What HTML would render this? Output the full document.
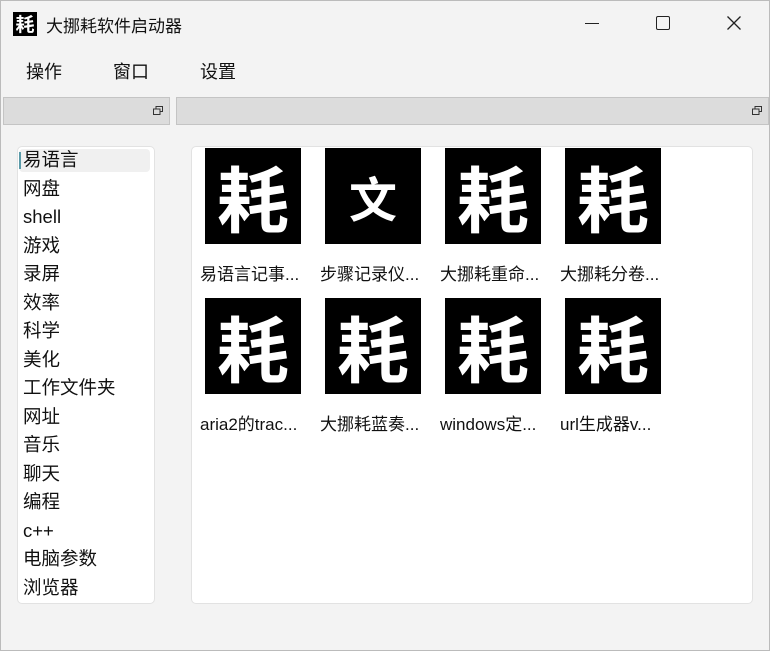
<!DOCTYPE html>
<html><head><meta charset="utf-8"><style>
body{margin:0;width:770px;height:651px;background:#f0f0f0;font-family:"Liberation Sans","Noto Sans CJK SC",sans-serif;position:relative;overflow:hidden;color:#111}
.win{position:absolute;left:0;top:0;width:770px;height:651px;background:#f3f3f3;border:1px solid #bbb;box-sizing:border-box}
.t{position:absolute;white-space:nowrap}
.ic{position:absolute;width:96px;height:96px;background:#000;color:#fff;font:bold 72px "Noto Sans CJK SC",sans-serif;text-align:center;line-height:96px}
.lab{position:absolute;font-size:17px;width:118px;white-space:nowrap}
.dock{position:absolute;top:96px;height:28px;background:#dcdcdc;border:1px solid #c4c4c4;box-sizing:border-box}
.fl{position:absolute;right:6px;top:8px;width:10px;height:9px}
</style></head><body>
<div class="win">
<div class="t" style="left:12px;top:11px;width:24px;height:24px;background:#000;color:#fff;font:bold 19px 'Noto Sans CJK SC';text-align:center;line-height:24px">耗</div>
<div class="t" style="left:45px;top:11px;font-size:17px">大挪耗软件启动器</div>
<div class="t" style="left:584px;top:22px;width:14px;height:1px;background:#222"></div>
<div class="t" style="left:655px;top:15px;width:12px;height:12px;border:1.5px solid #222;border-radius:2px"></div>
<svg class="t" style="left:726px;top:15px" width="14" height="14" viewBox="0 0 14 14"><path d="M0.5 0.5L13.5 13.5M13.5 0.5L0.5 13.5" stroke="#222" stroke-width="1.3"/></svg>
<div class="t" style="left:25px;top:57px;font-size:18px">操作</div>
<div class="t" style="left:112px;top:57px;font-size:18px">窗口</div>
<div class="t" style="left:199px;top:57px;font-size:18px">设置</div>
<div class="dock" style="left:2px;width:167px"><svg class="fl" viewBox="0 0 10 9"><rect x="3" y="0.5" width="6.5" height="5" fill="none" stroke="#333"/><rect x="0.5" y="3" width="6.5" height="5.5" fill="#dcdcdc" stroke="#333"/></svg></div>
<div class="dock" style="left:175px;width:593px"><svg class="fl" viewBox="0 0 10 9"><rect x="3" y="0.5" width="6.5" height="5" fill="none" stroke="#333"/><rect x="0.5" y="3" width="6.5" height="5.5" fill="#dcdcdc" stroke="#333"/></svg></div>
<div class="t" style="left:16px;top:145px;width:138px;height:458px;background:#fff;border:1px solid #e2e2e2;border-radius:5px;box-sizing:border-box"></div>
<div class="t" style="left:18px;top:148px;width:131px;height:23px;background:#f0f0f0;border-radius:4px"></div>
<div class="t" style="left:18px;top:151px;width:2px;height:17px;background:#5a9aa8"></div>
<div class="t" style="left:22px;top:145px;font-size:18.5px;line-height:28.5px">易语言<br>网盘<br>shell<br>游戏<br>录屏<br>效率<br>科学<br>美化<br>工作文件夹<br>网址<br>音乐<br>聊天<br>编程<br>c++<br>电脑参数<br>浏览器</div>
<div class="t" style="left:190px;top:145px;width:562px;height:458px;background:#fff;border:1px solid #e2e2e2;border-radius:5px;box-sizing:border-box"></div>
<div class="ic" style="left:204px;top:147px">耗</div>
<div class="ic" style="left:324px;top:147px;font-size:48px;font-weight:bold">文</div>
<div class="ic" style="left:444px;top:147px">耗</div>
<div class="ic" style="left:564px;top:147px">耗</div>
<div class="ic" style="left:204px;top:297px">耗</div>
<div class="ic" style="left:324px;top:297px">耗</div>
<div class="ic" style="left:444px;top:297px">耗</div>
<div class="ic" style="left:564px;top:297px">耗</div>
<div class="lab" style="left:199px;top:259px">易语言记事...</div>
<div class="lab" style="left:319px;top:259px">步骤记录仪...</div>
<div class="lab" style="left:439px;top:259px">大挪耗重命...</div>
<div class="lab" style="left:559px;top:259px">大挪耗分卷...</div>
<div class="lab" style="left:199px;top:409px">aria2的trac...</div>
<div class="lab" style="left:319px;top:409px">大挪耗蓝奏...</div>
<div class="lab" style="left:439px;top:409px">windows定...</div>
<div class="lab" style="left:559px;top:409px">url生成器v...</div>
</div>
</body></html>
